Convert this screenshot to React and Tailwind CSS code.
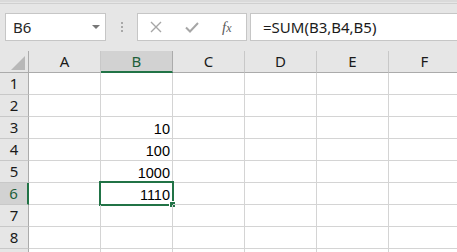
import React from 'react';

const cols = ['A', 'B', 'C', 'D', 'E', 'F'];
const rows = [1, 2, 3, 4, 5, 6, 7, 8, 9];
const values = { 3: '10', 4: '100', 5: '1000', 6: '1110' };

const App = () => {
  return (
    <div className="w-[457px] h-[252px] overflow-hidden bg-white font-['Noto_Sans',sans-serif]">
      {/* Formula bar */}
      <div className="h-[51px] bg-[#e6e6e6] border-t-2 border-[#dadada] relative">
        <div className="absolute top-[1px] left-0 right-0 h-px bg-[#d0d0d0]" />
        <div className="flex items-start pt-[11px] pl-[5px]">
          <div className="shrink-0 w-[101px] h-[28px] bg-white border border-[#c6c6c6] flex items-center justify-between pl-[7px] pr-[5px]">
            <span className="text-[15px] text-[#262626] leading-none">B6</span>
            <svg width="8" height="5" viewBox="0 0 8 5"><path d="M0 0h8L4 4z" fill="#777" /></svg>
          </div>
          <div className="shrink-0 w-[31px] h-[28px] flex flex-col items-center justify-center gap-[2px]">
            <span className="w-[2px] h-[2px] bg-[#a8a8a8]" />
            <span className="w-[2px] h-[2px] bg-[#a8a8a8]" />
            <span className="w-[2px] h-[2px] bg-[#a8a8a8]" />
          </div>
          <div className="shrink-0 w-[110px] h-[28px] bg-white border border-[#c6c6c6] flex items-center">
            <svg className="ml-[12px]" width="12" height="12" viewBox="0 0 12 12">
              <path d="M1 1l10 10M11 1L1 11" stroke="#a6a6a6" strokeWidth="1.4" />
            </svg>
            <svg className="ml-[23px]" width="14" height="11" viewBox="0 0 14 11">
              <path d="M1 5.5l4 4L13 1" stroke="#a6a6a6" strokeWidth="2" fill="none" />
            </svg>
            <span className="ml-[23px] font-['Liberation_Serif',serif] italic text-[15px] text-[#5c5c5c] leading-none">
              f<span className="text-[12px]">x</span>
            </span>
          </div>
          <div className="shrink-0 ml-[3px] w-[220px] h-[28px] bg-white border border-[#c6c6c6] border-r-0 flex items-center pl-[12px]">
            <span className="text-[15px] text-[#1a1a1a] leading-none">=SUM(B3,B4,B5)</span>
          </div>
        </div>
      </div>

      {/* Grid */}
      <div className="grid grid-cols-[29px_repeat(6,72px)] auto-rows-[22px]">
        <div className="bg-[#e6e6e6] border-r border-b border-[#ababab] flex items-end justify-end pr-[3px] pb-[2px]">
          <svg width="14" height="14" viewBox="0 0 14 14"><path d="M14 0v14H0z" fill="#b8b8b8" /></svg>
        </div>
        {cols.map((c) => (
          <div
            key={c}
            className={
              c === 'B'
                ? 'bg-[#d2d2d2] border-r border-[#ababab] border-b-2 border-b-[#217346] flex items-center justify-center text-[15px] text-[#1e5f3a]'
                : 'bg-[#e6e6e6] border-r border-b border-[#c8c8c8] border-b-[#ababab] flex items-center justify-center text-[15px] text-[#1a1a1a]'
            }
          >
            {c}
          </div>
        ))}
        {rows.map((r) => (
          <React.Fragment key={r}>
            <div
              className={
                r === 6
                  ? 'bg-[#d2d2d2] border-r-2 border-[#217346] border-b border-b-[#c8c8c8] flex items-center justify-center text-[15px] text-[#1e5f3a]'
                  : 'bg-[#e6e6e6] border-r border-b border-[#c8c8c8] border-r-[#ababab] flex items-center justify-center text-[15px] text-[#1a1a1a]'
              }
            >
              {r}
            </div>
            {cols.map((c) => (
              <div
                key={c}
                className="relative border-r border-b border-[#d4d4d4] flex items-end justify-end pr-[2px] pb-[2px] font-['Liberation_Sans',sans-serif] text-[14.5px] leading-none text-black"
              >
                {c === 'B' && values[r]}
                {c === 'B' && r === 6 && (
                  <>
                    <div className="absolute -left-[2px] -top-[2px] w-[75px] h-[25px] border-2 border-[#217346]" />
                    <div className="absolute left-[68px] top-[18px] w-[7px] h-[7px] bg-[#217346] border border-white" />
                  </>
                )}
              </div>
            ))}
          </React.Fragment>
        ))}
      </div>
    </div>
  );
};

export default App;
